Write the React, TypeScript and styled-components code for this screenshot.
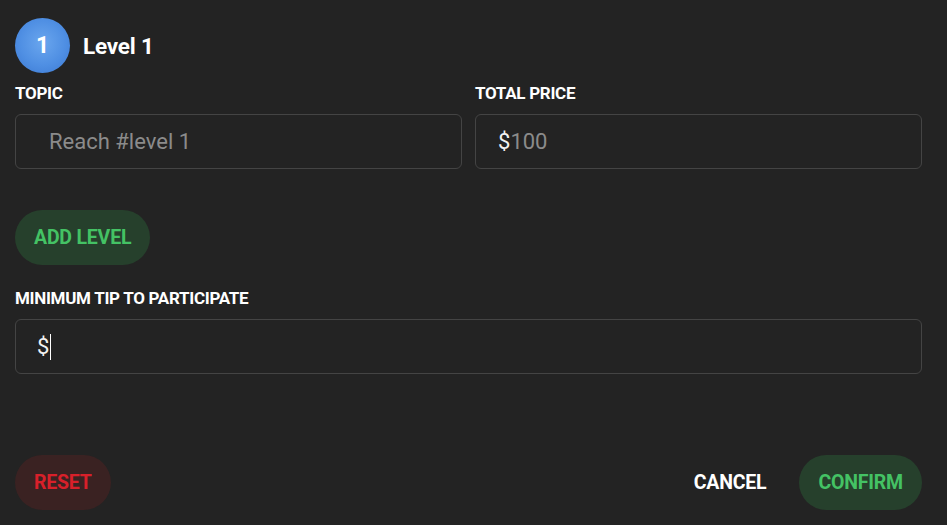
import { FC } from 'react';
import styled, { createGlobalStyle } from 'styled-components';

const GlobalStyle = createGlobalStyle`
  html, body {
    margin: 0;
    background: #232323;
    font-family: Roboto, 'Liberation Sans', sans-serif;
  }
`;

const Page = styled.div`
  box-sizing: border-box;
  width: 947px;
  height: 525px;
  padding: 18px 25px 15px 15px;
  display: flex;
  flex-direction: column;
  color: #fff;
`;

const Header = styled.div`
  display: flex;
  align-items: center;
  gap: 13px;
`;

const Badge = styled.div`
  width: 55px;
  height: 55px;
  border-radius: 50%;
  background: radial-gradient(circle at 50% 45%, #6aa6ee 0%, #4f8fe3 55%, #3b78d2 100%);
  display: flex;
  align-items: center;
  justify-content: center;
  font-size: 23px;
  font-weight: 700;
`;

const Title = styled.div`
  font-size: 22.5px;
  font-weight: 700;
  letter-spacing: -0.2px;
`;

const Row = styled.div`
  display: grid;
  grid-template-columns: 1fr 1fr;
  gap: 13px;
  margin-top: 10px;
`;

const Field = styled.div<{ $top?: number }>`
  display: flex;
  flex-direction: column;
  gap: 11px;
  margin-top: ${p => p.$top ?? 0}px;
`;

const Label = styled.label`
  font-size: 17px;
  font-weight: 700;
  letter-spacing: -0.3px;
  line-height: 20px;
  text-transform: uppercase;
`;

const InputBox = styled.div<{ $indent: number }>`
  box-sizing: border-box;
  height: 55px;
  border: 1px solid #444;
  border-radius: 6px;
  display: flex;
  align-items: center;
  padding-left: ${p => p.$indent}px;
  font-size: 22px;
`;

const Prefix = styled.span`
  color: #f2f2f2;
`;

const Placeholder = styled.span`
  color: #8b8b8b;
`;

const Caret = styled.span`
  display: inline-block;
  width: 1px;
  height: 26px;
  background: #fff;
  margin-left: 1px;
`;

const Pill = styled.button<{ $tone: 'green' | 'red' | 'plain' }>`
  border: none;
  border-radius: 28px;
  height: 55px;
  padding: 0 19px;
  font-family: inherit;
  font-size: 19.5px;
  font-weight: 700;
  letter-spacing: -0.2px;
  cursor: pointer;
  background: ${p =>
    p.$tone === 'green' ? '#26402c' : p.$tone === 'red' ? '#3a2222' : 'transparent'};
  color: ${p =>
    p.$tone === 'green' ? '#44c264' : p.$tone === 'red' ? '#d8202a' : '#ffffff'};
`;

const AddRow = styled.div`
  margin-top: 41px;
`;

const Footer = styled.div`
  margin-top: auto;
  display: flex;
  align-items: center;
  justify-content: space-between;
`;

const Right = styled.div`
  display: flex;
  align-items: center;
  gap: 14px;
`;

const App: FC = () => {
  return (
    <>
      <GlobalStyle />
      <Page>
        <Header>
          <Badge>1</Badge>
          <Title>Level 1</Title>
        </Header>
        <Row>
          <Field>
            <Label>Topic</Label>
            <InputBox $indent={33}>
              <Placeholder>Reach #level 1</Placeholder>
            </InputBox>
          </Field>
          <Field>
            <Label>Total price</Label>
            <InputBox $indent={22}>
              <Prefix>$</Prefix>
              <Placeholder>100</Placeholder>
            </InputBox>
          </Field>
        </Row>
        <AddRow>
          <Pill $tone="green">ADD LEVEL</Pill>
        </AddRow>
        <Field $top={23}>
          <Label>Minimum tip to participate</Label>
          <InputBox $indent={21}>
            <Prefix>$</Prefix>
            <Caret />
          </InputBox>
        </Field>
        <Footer>
          <Pill $tone="red">RESET</Pill>
          <Right>
            <Pill $tone="plain">CANCEL</Pill>
            <Pill $tone="green">CONFIRM</Pill>
          </Right>
        </Footer>
      </Page>
    </>
  );
};

export default App;
